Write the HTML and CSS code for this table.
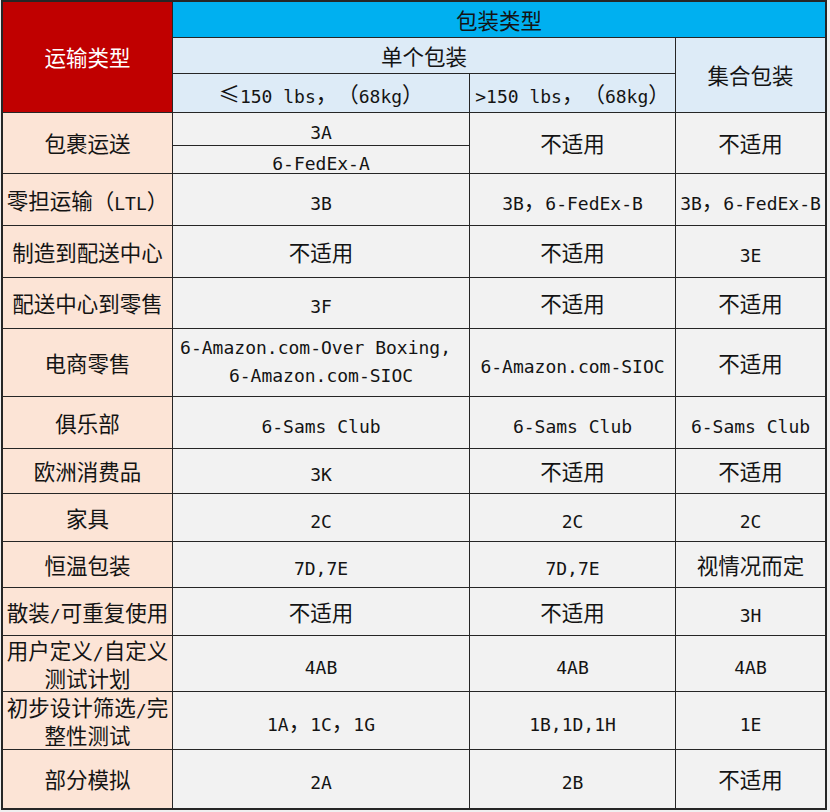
FILE: index.html
```html
<!DOCTYPE html>
<html lang="zh-CN">
<head>
<meta charset="utf-8">
<title>运输类型 / 包装类型</title>
<link rel="stylesheet" href="styles.css">
</head>
<body>
<div class="sheet">
  <div class="c h-red"><div>运输类型</div></div>
  <div class="c h-blue"><div>包装类型</div></div>

  <div class="c h-lb span2c"><div>单个包装</div></div>
  <div class="c h-lb span2r"><div>集合包装</div></div>

  <div class="c h-lb"><div><span class="fw">≤</span><span class="l">150 lbs</span>，（<span class="l">68kg</span>）</div></div>
  <div class="c h-lb"><div><span class="l">&gt;150 lbs</span>，（<span class="l">68kg</span>）</div></div>

  <div class="c lab span2r"><div>包裹运送</div></div>
  <div class="c"><div><span class="l">3A</span></div></div>
  <div class="c span2r"><div>不适用</div></div>
  <div class="c span2r"><div>不适用</div></div>
  <div class="c"><div><span class="l">6-FedEx-A</span></div></div>

  <div class="c lab"><div>零担运输（<span class="l">LTL</span>）</div></div>
  <div class="c"><div><span class="l">3B</span></div></div>
  <div class="c"><div><span class="l">3B</span>，<span class="l">6-FedEx-B</span></div></div>
  <div class="c"><div><span class="l">3B</span>，<span class="l">6-FedEx-B</span></div></div>

  <div class="c lab"><div>制造到配送中心</div></div>
  <div class="c"><div>不适用</div></div>
  <div class="c"><div>不适用</div></div>
  <div class="c"><div><span class="l">3E</span></div></div>

  <div class="c lab"><div>配送中心到零售</div></div>
  <div class="c"><div><span class="l">3F</span></div></div>
  <div class="c"><div>不适用</div></div>
  <div class="c"><div>不适用</div></div>

  <div class="c lab"><div>电商零售</div></div>
  <div class="c"><div class="wrapped"><span class="l">6-Amazon.com-Over Boxing,&nbsp;</span><br><span class="l">6-Amazon.com-SIOC</span></div></div>
  <div class="c"><div><span class="l">6-Amazon.com-SIOC</span></div></div>
  <div class="c"><div>不适用</div></div>

  <div class="c lab"><div>俱乐部</div></div>
  <div class="c"><div><span class="l">6-Sams Club</span></div></div>
  <div class="c"><div><span class="l">6-Sams Club</span></div></div>
  <div class="c"><div><span class="l">6-Sams Club</span></div></div>

  <div class="c lab"><div>欧洲消费品</div></div>
  <div class="c"><div><span class="l">3K</span></div></div>
  <div class="c"><div>不适用</div></div>
  <div class="c"><div>不适用</div></div>

  <div class="c lab"><div>家具</div></div>
  <div class="c"><div><span class="l">2C</span></div></div>
  <div class="c"><div><span class="l">2C</span></div></div>
  <div class="c"><div><span class="l">2C</span></div></div>

  <div class="c lab"><div>恒温包装</div></div>
  <div class="c"><div><span class="l">7D,7E</span></div></div>
  <div class="c"><div><span class="l">7D,7E</span></div></div>
  <div class="c"><div>视情况而定</div></div>

  <div class="c lab"><div>散装<span class="l">/</span>可重复使用</div></div>
  <div class="c"><div>不适用</div></div>
  <div class="c"><div>不适用</div></div>
  <div class="c"><div><span class="l">3H</span></div></div>

  <div class="c lab"><div>用户定义<span class="l">/</span>自定义<br>测试计划</div></div>
  <div class="c"><div><span class="l">4AB</span></div></div>
  <div class="c"><div><span class="l">4AB</span></div></div>
  <div class="c"><div><span class="l">4AB</span></div></div>

  <div class="c lab"><div>初步设计筛选<span class="l">/</span>完<br>整性测试</div></div>
  <div class="c"><div><span class="l">1A</span>，<span class="l">1C</span>，<span class="l">1G</span></div></div>
  <div class="c"><div><span class="l">1B,1D,1H</span></div></div>
  <div class="c"><div><span class="l">1E</span></div></div>

  <div class="c lab"><div>部分模拟</div></div>
  <div class="c"><div><span class="l">2A</span></div></div>
  <div class="c"><div><span class="l">2B</span></div></div>
  <div class="c"><div>不适用</div></div>
</div>
</body>
</html>
```

FILE: styles.css
```css
html, body {
  margin: 0;
  padding: 0;
  background: #f0f0f0;
}

body {
  font-family: "Noto Sans CJK SC", "Noto Sans", sans-serif;
  font-size: 21.5px;
  line-height: 28px;
  color: #141414;
  text-spacing-trim: space-all;
}

.sheet {
  display: grid;
  grid-template-columns: 169px 296px 205px 149px;
  grid-template-rows: 35px 35px 38px 32px 27px 51px 51px 50px 67px 51px 44px 47px 45px 47px 55px 57px 58px;
  gap: 1px;
  width: max-content;
  margin-left: 1px;
  background: #262626;
  border: 2px solid #262626;
}

.c {
  display: flex;
  align-items: center;
  justify-content: center;
  text-align: center;
  background: #f2f2f2;
  white-space: nowrap;
}

.h-red {
  grid-row: span 3;
  background: #c00000;
  color: #ffffff;
}

.h-blue {
  grid-column: span 3;
  background: #00b0f0;
}

.h-lb {
  background: #ddebf7;
}

.lab {
  background: #fce4d6;
}

.span2c {
  grid-column: span 2;
}

.span2r {
  grid-row: span 2;
}

.wrapped {
  padding-bottom: 10px;
}

.l {
  font-family: "DejaVu Sans Mono", "Liberation Mono", monospace;
  font-size: 18px;
  line-height: 18px;
  vertical-align: -1px;
}

.fw {
  display: inline-block;
  width: 1em;
  text-align: center;
}
```
